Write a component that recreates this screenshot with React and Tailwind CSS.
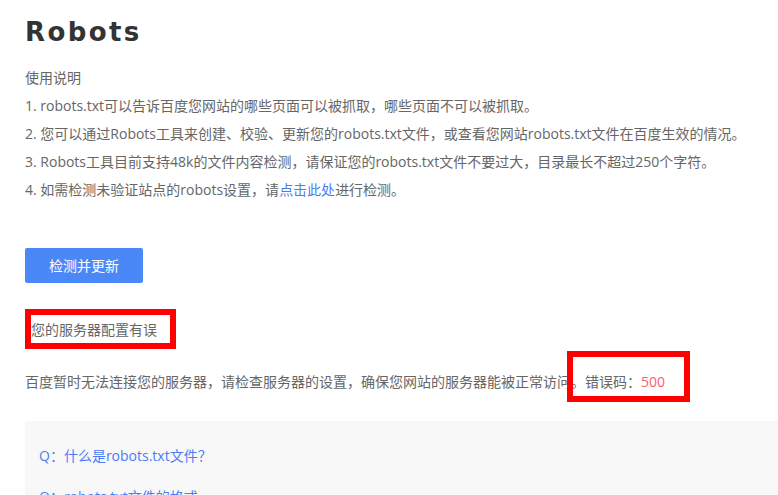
import React from 'react';

const faqs = ['Q：什么是robots.txt文件？', 'Q：robots.txt文件的格式'];

export default function App() {
  return (
    <div
      className="relative h-[495px] w-[778px] overflow-hidden bg-white text-[14px] text-[#666]"
      style={{ fontFamily: '"Open Sans", "Noto Sans CJK SC", sans-serif' }}
    >
      <div className="pl-[25px] pt-[16px]">
        {/* タイトル */}
        <h1
          className="h-[32px] text-[26px] font-bold leading-[32px] tracking-[2.4px] text-[#333]"
          style={{ fontFamily: '"DejaVu Sans", Verdana, sans-serif' }}
        >
          Robots
        </h1>

        {/* 使用说明 */}
        <div className="mt-[16px] leading-[28px]">
          <p>使用说明</p>
          <p>1. robots.txt可以告诉百度您网站的哪些页面可以被抓取，哪些页面不可以被抓取。</p>
          <p>2. 您可以通过Robots工具来创建、校验、更新您的robots.txt文件，或查看您网站robots.txt文件在百度生效的情况。</p>
          <p>3. Robots工具目前支持48k的文件内容检测，请保证您的robots.txt文件不要过大，目录最长不超过250个字符。</p>
          <p>
            4. 如需检测未验证站点的robots设置，请<a className="text-[#4a7cf6]">点击此处</a>进行检测。
          </p>
        </div>

        <button className="mt-[44px] h-[35px] w-[118px] rounded-[2px] bg-[#4a88f8] text-[14px] text-white">
          检测并更新
        </button>

        {/* エラー表示 */}
        <p className="mt-[36px] pl-[6px] leading-[22px]">您的服务器配置有误</p>
        <p className="mt-[30px] leading-[22px]">
          百度暂时无法连接您的服务器，请检查服务器的设置，确保您网站的服务器能被正常访问。错误码：
          <span className="text-[#ff5a6a]">500</span>
        </p>

        {/* FAQ */}
        <div className="mt-[28px] bg-[#f8f8f8] pl-[14px] pt-[24px]">
          {faqs.map((q) => (
            <p key={q} className="mb-[19px] leading-[22px] text-[#4a7cf6]">
              {q}
            </p>
          ))}
        </div>
      </div>

      {/* 赤枠 */}
      <div className="absolute left-[25px] top-[309px] h-[40px] w-[151px] border-[6px] border-[#ff0000]" />
      <div className="absolute left-[567px] top-[351px] h-[51px] w-[123px] border-[6px] border-[#ff0000]" />
    </div>
  );
}
